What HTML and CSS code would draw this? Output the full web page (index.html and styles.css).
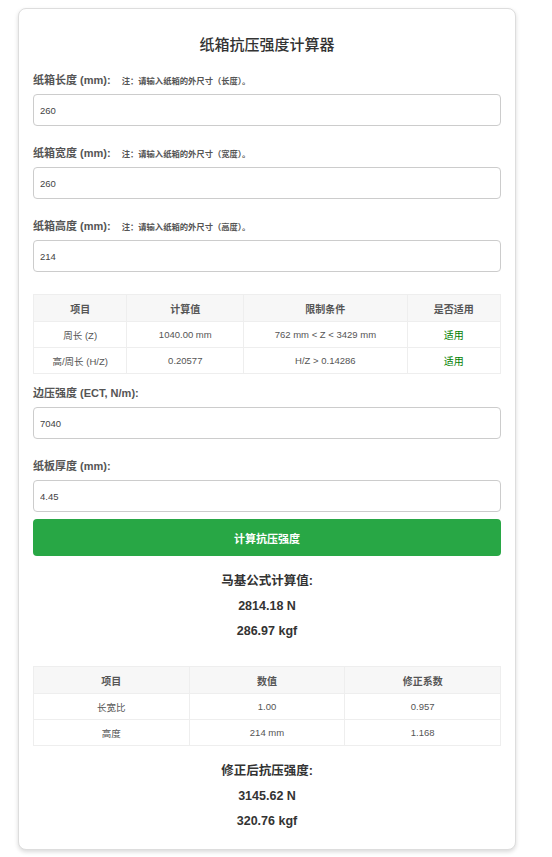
FILE: index.html
```html
<!DOCTYPE html>
<html lang="zh-CN">
<head>
    <meta charset="UTF-8">
    <meta name="viewport" content="width=device-width, initial-scale=1.0">
    <title>纸箱抗压强度计算器</title>
    <link rel="stylesheet" href="styles.css">
</head>
<body>
    <div class="container">
        <h2>纸箱抗压强度计算器</h2>

        <div class="form-group">
            <label for="length">纸箱长度 (mm): <span class="note">注：请输入纸箱的外尺寸（长度）。</span></label>
            <input type="text" id="length" value="260">
        </div>
        <div class="form-group">
            <label for="width">纸箱宽度 (mm): <span class="note">注：请输入纸箱的外尺寸（宽度）。</span></label>
            <input type="text" id="width" value="260">
        </div>
        <div class="form-group">
            <label for="height">纸箱高度 (mm): <span class="note">注：请输入纸箱的外尺寸（高度）。</span></label>
            <input type="text" id="height" value="214">
        </div>

        <table class="check-table">
            <tr>
                <th>项目</th>
                <th>计算值</th>
                <th>限制条件</th>
                <th>是否适用</th>
            </tr>
            <tr>
                <td>周长 (Z)</td>
                <td>1040.00 mm</td>
                <td>762 mm &lt; Z &lt; 3429 mm</td>
                <td class="ok">适用</td>
            </tr>
            <tr>
                <td>高/周长 (H/Z)</td>
                <td>0.20577</td>
                <td>H/Z &gt; 0.14286</td>
                <td class="ok">适用</td>
            </tr>
        </table>

        <div class="form-group">
            <label for="ect">边压强度 (ECT, N/m):</label>
            <input type="text" id="ect" value="7040">
        </div>
        <div class="form-group tight">
            <label for="thickness">纸板厚度 (mm):</label>
            <input type="text" id="thickness" value="4.45">
        </div>

        <button class="calc-button">计算抗压强度</button>

        <div class="result">
            <h3>马基公式计算值:</h3>
            <p>2814.18 N</p>
            <p>286.97 kgf</p>
        </div>

        <table class="factor-table">
            <tr>
                <th>项目</th>
                <th>数值</th>
                <th>修正系数</th>
            </tr>
            <tr>
                <td>长宽比</td>
                <td>1.00</td>
                <td>0.957</td>
            </tr>
            <tr>
                <td>高度</td>
                <td>214 mm</td>
                <td>1.168</td>
            </tr>
        </table>

        <div class="result last">
            <h3>修正后抗压强度:</h3>
            <p>3145.62 N</p>
            <p>320.76 kgf</p>
        </div>
    </div>
</body>
</html>
```

FILE: styles.css
```css
body {
    margin: 0;
    padding: 8px 18px;
    font-family: "Liberation Sans", "Noto Sans CJK SC", sans-serif;
    background-color: #fff;
    color: #333;
}

.container {
    max-width: 498px;
    box-sizing: border-box;
    padding: 15px 14px;
    border: 1px solid #ddd;
    border-radius: 8px;
    box-shadow: 0 2px 4px rgba(0, 0, 0, 0.15);
    background: #fff;
}

h2 {
    font-size: 15px;
    line-height: 20px;
    font-weight: 500;
    margin: 11px 0 17px;
    text-align: center;
    color: #333;
}

.form-group {
    margin-bottom: 19px;
}
.form-group.tight {
    margin-bottom: 7px;
}

label {
    display: block;
    height: 16px;
    font-size: 11px;
    line-height: 16px;
    font-weight: bold;
    color: #555;
    margin-bottom: 6px;
}

.note {
    font-size: 8.3px;
    line-height: 1;
    margin-left: 8px;
}

input {
    display: block;
    width: 100%;
    height: 32px;
    box-sizing: border-box;
    padding: 0 6px;
    border: 1px solid #ccc;
    border-radius: 4px;
    font-family: inherit;
    font-size: 9.5px;
    color: #444;
}

table {
    width: 100%;
    border-collapse: collapse;
    font-size: 9.5px;
    color: #555;
}
th, td {
    border: 1px solid #eee;
    text-align: center;
    padding: 0 4px;
}
th {
    height: 26px;
    background: #f7f7f7;
    font-size: 10px;
    font-weight: bold;
    color: #555;
}
td {
    height: 25px;
}
td.ok {
    color: green;
    font-size: 10px;
}

.check-table {
    margin: 22px 0 11px;
}
.check-table th:nth-child(1) { width: 20%; }
.check-table th:nth-child(2) { width: 25%; }
.check-table th:nth-child(3) { width: 35%; }
.check-table th:nth-child(4) { width: 20%; }

.factor-table th {
    width: 33.33%;
}

.calc-button {
    display: block;
    width: 100%;
    height: 37px;
    background-color: #28a745;
    color: white;
    border: none;
    border-radius: 4px;
    font-family: inherit;
    font-size: 11px;
    font-weight: bold;
    cursor: pointer;
}
.calc-button:hover {
    background-color: #218838;
}

.result {
    text-align: center;
    margin: 13px 0 22px;
}
.result.last {
    margin-bottom: 0;
}
.result h3,
.result p {
    margin: 0;
    font-size: 12.5px;
    line-height: 25px;
    font-weight: bold;
    color: #333;
}
```
